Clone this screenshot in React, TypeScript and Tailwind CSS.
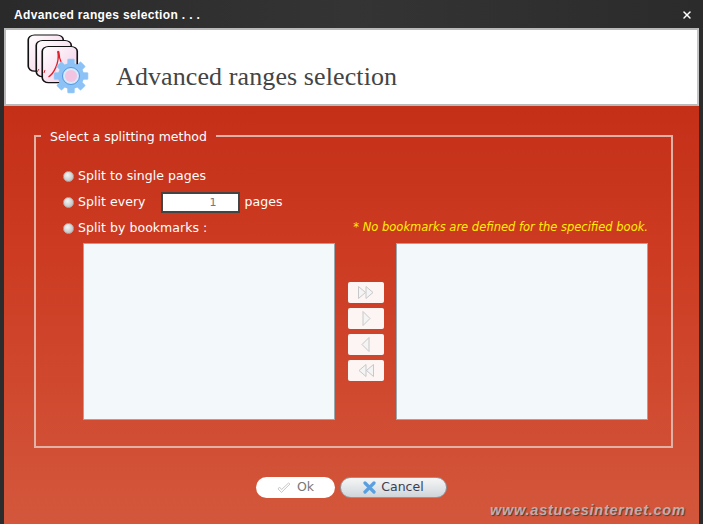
import { X } from "lucide-react"

const font = { verdana: "font-['DejaVu_Sans',sans-serif]" }

function Logo() {
    const page = "M6 0h18a5 5 0 0 1 5 5v28a5 5 0 0 1-5 5H6a5 5 0 0 1-5-5V5a5 5 0 0 1 5-5z"
    return (
        <svg width="64" height="62" viewBox="0 0 64 62" className="block">
            <defs>
                <linearGradient id="pg" x1="0" y1="0" x2="1" y2="1">
                    <stop offset="0" stopColor="#ffffff" />
                    <stop offset="1" stopColor="#f3c9e4" />
                </linearGradient>
            </defs>
            <path d={page} transform="translate(0,1) scale(1.25,0.95)" fill="url(#pg)" stroke="#111" strokeWidth="1.300" />
            <path d={page} transform="translate(8,6.500) scale(1.25,0.95)" fill="url(#pg)" stroke="#111" strokeWidth="1.300" />
            <path d={page} transform="translate(14,12.500) scale(1.25,0.95)" fill="url(#pg)" stroke="#111" strokeWidth="1.300" />
            <path d="M21.500 43c5-3 11-14 9.500-24-1-2 1-2 1 0 0 7 4 15 9 16" fill="none" stroke="#e0202a" strokeWidth="1.300" />
            <path d="M10 38l2-3M17 39l1-3" fill="none" stroke="#e0202a" strokeWidth="1" />
            <g transform="translate(44,42)">
                {[0, 45, 90, 135].map((a) => (
                    <rect key={a} x="-3.500" y="-17" width="7" height="34" rx="1" fill="#8cc2f5" stroke="#a5d2f8" strokeWidth="0.600" transform={`rotate(${a})`} />
                ))}
                <circle r="13" fill="#8cc2f5" />
                <circle r="8.500" fill="#d7e9fb" stroke="#4f97e2" strokeWidth="1" />
                <circle r="6" fill="#f3c3e2" />
            </g>
        </svg>
    )
}

function Radio({ label }: { label: string }) {
    return (
        <label className="flex items-center gap-[4px] h-[14px]">
            <span className="w-[11px] h-[11px] rounded-full bg-[radial-gradient(circle_at_40%_35%,#f4f4f4,#b4b4b4)] border border-[#a9a9a9]" />
            <span>{label}</span>
        </label>
    )
}

function ArrowBtn({ dir, double }: { dir: "left" | "right"; double?: boolean }) {
    const flip = dir === "left" ? "scale(-1,1) translate(-20,0)" : undefined
    return (
        <button className="w-[36px] h-[21px] bg-white/95 rounded-[2px] flex items-center justify-center">
            <svg width="20" height="17" viewBox="0 0 20 17">
                <g transform={flip} fill="#f4f4f4" stroke="#c8c8c8" strokeWidth="1">
                    {double ? (
                        <>
                            <path d="M2.500 2.500v12l7-6z" />
                            <path d="M10 2.500v12l7-6z" />
                        </>
                    ) : (
                        <path d="M7 1.500v14l7-7z" />
                    )}
                </g>
            </svg>
        </button>
    )
}

function ListBox() {
    return <div className="w-[252px] h-[177px] bg-[#f3f8fb] border border-[#9aa7ad]" />
}

export default function App() {
    return (
        <div className={`w-[703px] h-[524px] bg-[#2c2c2c] flex flex-col overflow-hidden relative ${font.verdana}`}>
            <div className="h-[28px] shrink-0 flex items-center justify-between pl-[14px] pr-[10px] pt-[2px] bg-[linear-gradient(90deg,#2a2a2a,#343434_50%,#2b2b2b)]">
                <span className="text-white text-[12px] font-bold font-['Liberation_Sans',sans-serif] tracking-[0.35px]">Advanced ranges selection . . .</span>
                <X className="w-[12px] h-[12px] text-white" strokeWidth={3} />
            </div>
            <div className="flex-1 flex flex-col ml-[4px] mr-[4px] min-h-0">
                <div className="h-[78px] shrink-0 bg-white border-2 border-[#b9b9b9] border-r-[#c4c4c4] flex items-start">
                    <div className="ml-[21px] mt-[4px]">
                        <Logo />
                    </div>
                    <h1 className="ml-[25px] mt-[34px] text-[26px] leading-none text-[#444444] font-['Liberation_Serif',serif] tracking-[0.1px]">
                        Advanced ranges selection
                    </h1>
                </div>
                <div className="flex-1 min-h-0 flex flex-col pl-[30px] pr-[26px] pt-[21px] text-white text-[12.5px] leading-none bg-[linear-gradient(180deg,#c42f18_0%,#cc3b22_35%,#d3573c_100%)]">
                    <fieldset className="h-[321px] border-2 border-[#e2b2a6] pl-[47px] pr-[23px] pt-[25px]">
                        <legend className="-ml-[42px] px-[9px] pt-[2px] text-[12.5px] leading-[15px]">Select a splitting method</legend>
                        <div className="flex flex-col gap-[12px] -ml-[20px] tracking-[0.05px]">
                            <Radio label="Split to single pages" />
                            <div className="flex items-center h-[14px]">
                                <Radio label="Split every" />
                                <input
                                    readOnly
                                    value="1"
                                    className="ml-[15px] w-[79px] h-[21px] bg-white border-2 border-[#444] text-right pr-[21px] text-[#777] text-[11px] outline-none"
                                />
                                <span className="ml-[5px]">pages</span>
                            </div>
                            <div className="flex items-center justify-between">
                                <Radio label="Split by bookmarks :" />
                                <span className="italic text-[#ffee00] text-[11.5px] tracking-[0px]">* No bookmarks are defined for the specified book.</span>
                            </div>
                        </div>
                        <div className="flex justify-between mt-[8px]">
                            <ListBox />
                            <div className="flex flex-col gap-[5px] mt-[39px]">
                                <ArrowBtn dir="right" double />
                                <ArrowBtn dir="right" />
                                <ArrowBtn dir="left" />
                                <ArrowBtn dir="left" double />
                            </div>
                            <ListBox />
                        </div>
                    </fieldset>
                    <div className="flex justify-center gap-[5px] mt-[29px] pr-[4px]">
                        <button className="w-[79px] h-[21px] bg-white rounded-full flex items-center justify-center gap-[6px] text-[#777] text-[12.5px]">
                            <svg width="14" height="12" viewBox="0 0 14 12">
                                <path d="M1 7l3.500 3.500L13 2l-1.500-1-7 6.500L2.500 5z" fill="#fafafa" stroke="#cccccc" strokeWidth="1" />
                            </svg>
                            Ok
                        </button>
                        <button className="w-[107px] h-[21px] rounded-full border border-[#8b9aa0] bg-[linear-gradient(180deg,#f6f6f6,#dfe3e6_60%,#cfd4d8)] flex items-center justify-center gap-[5px] text-[#3b3f52] text-[12.5px]">
                            <svg width="13" height="13" viewBox="0 0 13 13">
                                <path d="M2 2l9 9M11 2l-9 9" stroke="#5a9fe0" strokeWidth="3.200" strokeLinecap="round" />
                            </svg>
                            Cancel
                        </button>
                    </div>
                </div>
            </div>
            <span className="absolute left-[490px] top-[503px] italic font-bold text-[14.5px] leading-none text-[#bdaeac] font-['Liberation_Sans',sans-serif] tracking-[0.75px] [text-shadow:1px_1px_1px_#5a3a30]">
                www.astucesinternet.com
            </span>
        </div>
    )
}
